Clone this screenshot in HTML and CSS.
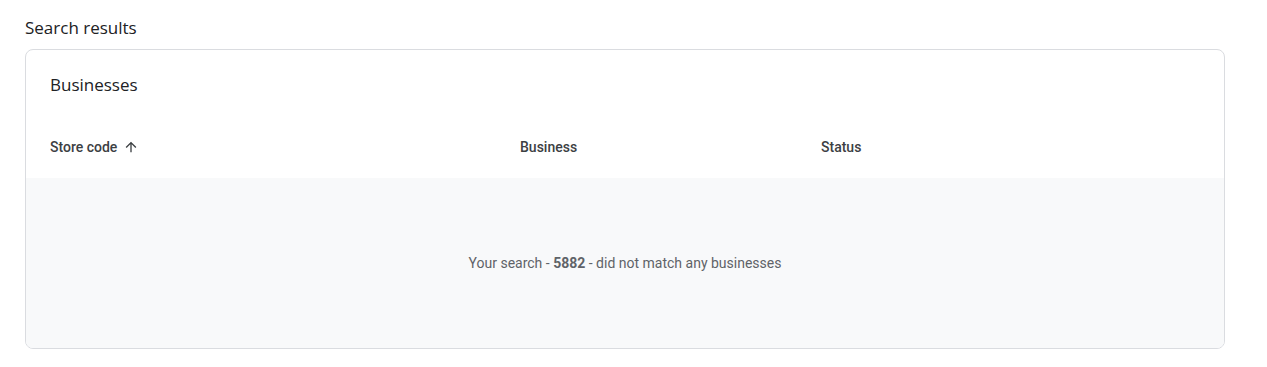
FILE: index.html
```html
<!DOCTYPE html>
<html>

<head>
    <meta charset="UTF-8">
    <title>Search results</title>
    <link rel="stylesheet" href="styles.css">
</head>

<body>
    <div class="page">
        <h2 class="page-title">Search results</h2>

        <div class="card">
            <div class="card-title">Businesses</div>

            <div class="table-head">
                <div class="th">
                    Store code
                    <svg class="sort-icon" viewBox="0 0 24 24" width="16" height="16">
                        <path d="M4 12l1.41 1.41L11 7.83V20h2V7.83l5.58 5.59L20 12l-8-8-8 8z"></path>
                    </svg>
                </div>
                <div class="th">Business</div>
                <div class="th">Status</div>
            </div>

            <div class="empty">
                <p class="empty-text">Your search - <b>5882</b> - did not match any businesses</p>
            </div>
        </div>
    </div>
</body>

</html>
```

FILE: styles.css
```css
* {
    margin: 0;
    padding: 0;
    box-sizing: border-box;
}

body {
    background: #fff;
    font-family: Roboto, "Liberation Sans", Arial, sans-serif;
    color: #202124;
}

.page {
    padding: 16px 0 0 25px;
}

.page-title {
    font-family: "Open Sans", Roboto, sans-serif;
    font-weight: 400;
    font-size: 17px;
    line-height: 24px;
    color: #202124;
    margin-bottom: 9px;
}

.card {
    width: 1200px;
    height: 300px;
    border: 1px solid #dadce0;
    border-radius: 8px;
    overflow: hidden;
    display: flex;
    flex-direction: column;
}

.card-title {
    font-family: "Open Sans", Roboto, sans-serif;
    font-size: 17px;
    line-height: 24px;
    color: #202124;
    padding: 23px 24px 21px;
}

.table-head {
    display: grid;
    grid-template-columns: 470px 301px 1fr;
    height: 60px;
    align-items: center;
    padding: 0 0 2px 24px;
}

.th {
    display: flex;
    align-items: center;
    font-size: 14px;
    font-weight: 500;
    color: #3c4043;
    line-height: 20px;
}

.sort-icon {
    margin-left: 6px;
    fill: #3c4043;
}

.empty {
    flex: 1;
    background: #f8f9fa;
    display: flex;
    align-items: center;
    justify-content: center;
}

.empty-text {
    font-size: 14px;
    line-height: 20px;
    color: #5f6368;
}

.empty-text b {
    font-weight: 700;
}
```
